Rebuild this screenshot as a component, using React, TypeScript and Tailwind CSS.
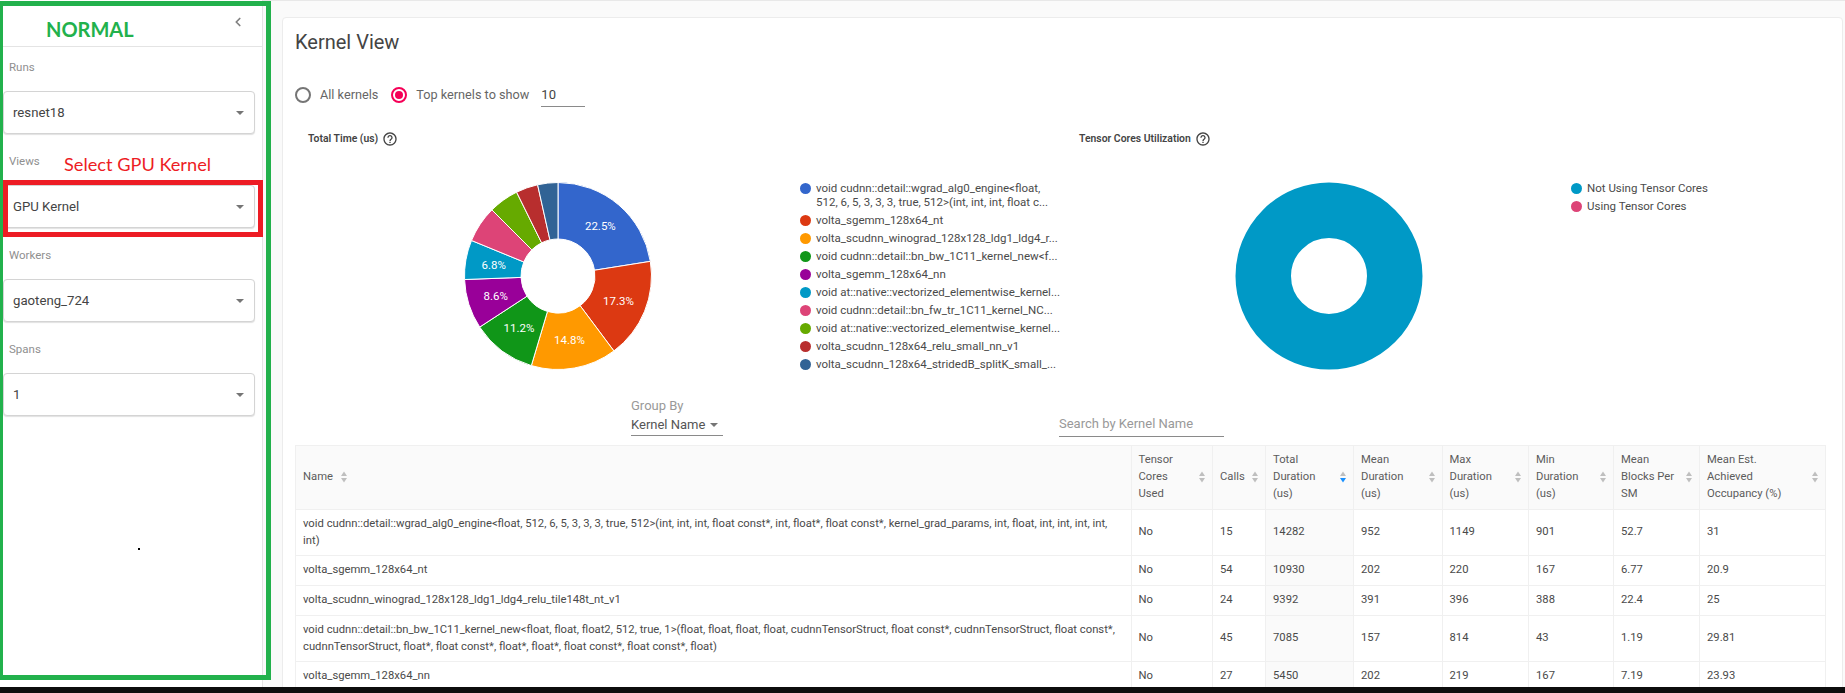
import { ChevronLeft } from "lucide-react";

const pieColors = ["#3366cc", "#dc3912", "#ff9900", "#109618", "#990099", "#0099c6", "#dd4477", "#66aa00", "#b82e2e", "#316395"];

const kernelSlices = [
  { value: 22.5, label: "22.5%" },
  { value: 17.3, label: "17.3%" },
  { value: 14.8, label: "14.8%" },
  { value: 11.2, label: "11.2%" },
  { value: 8.6, label: "8.6%" },
  { value: 6.8, label: "6.8%" },
  { value: 6.3 },
  { value: 5.2 },
  { value: 3.8 },
  { value: 3.5 },
];

const kernelLegend = [
  ["void cudnn::detail::wgrad_alg0_engine<float,", "512, 6, 5, 3, 3, 3, true, 512>(int, int, int, float c..."],
  ["volta_sgemm_128x64_nt"],
  ["volta_scudnn_winograd_128x128_ldg1_ldg4_r..."],
  ["void cudnn::detail::bn_bw_1C11_kernel_new<f..."],
  ["volta_sgemm_128x64_nn"],
  ["void at::native::vectorized_elementwise_kernel..."],
  ["void cudnn::detail::bn_fw_tr_1C11_kernel_NC..."],
  ["void at::native::vectorized_elementwise_kernel..."],
  ["volta_scudnn_128x64_relu_small_nn_v1"],
  ["volta_scudnn_128x64_stridedB_splitK_small_..."],
];

const columns = [
  { title: "Tensor Cores Used", width: 81.5 },
  { title: "Calls", width: 53 },
  { title: "Total Duration (us)", width: 88, active: true },
  { title: "Mean Duration (us)", width: 88.5 },
  { title: "Max Duration (us)", width: 86.5 },
  { title: "Min Duration (us)", width: 85 },
  { title: "Mean Blocks Per SM", width: 86 },
  { title: "Mean Est. Achieved Occupancy (%)", width: 126 },
];

const rows = [
  ["void cudnn::detail::wgrad_alg0_engine<float, 512, 6, 5, 3, 3, 3, true, 512>(int, int, int, float const*, int, float*, float const*, kernel_grad_params, int, float, int, int, int, int, int)", "No", "15", "14282", "952", "1149", "901", "52.7", "31"],
  ["volta_sgemm_128x64_nt", "No", "54", "10930", "202", "220", "167", "6.77", "20.9"],
  ["volta_scudnn_winograd_128x128_ldg1_ldg4_relu_tile148t_nt_v1", "No", "24", "9392", "391", "396", "388", "22.4", "25"],
  ["void cudnn::detail::bn_bw_1C11_kernel_new<float, float, float2, 512, true, 1>(float, float, float, float, cudnnTensorStruct, float const*, cudnnTensorStruct, float const*, cudnnTensorStruct, float*, float const*, float*, float*, float const*, float const*, float)", "No", "45", "7085", "157", "814", "43", "1.19", "29.81"],
  ["volta_sgemm_128x64_nn", "No", "27", "5450", "202", "219", "167", "7.19", "23.93"],
];

function polar(r: number, pct: number) {
  const a = (pct / 100) * Math.PI * 2;
  return [95 + r * Math.sin(a), 95 - r * Math.cos(a)];
}

function KernelDonut() {
  const outer = 93.5;
  const inner = 37;
  let start = 0;
  return (
    <svg width="190" height="190" className="shrink-0">
      {kernelSlices.map((s, i) => {
        const end = start + s.value;
        const [x1, y1] = polar(outer, start);
        const [x2, y2] = polar(outer, end);
        const [x3, y3] = polar(inner, end);
        const [x4, y4] = polar(inner, start);
        const mid = polar((outer + inner) / 2, start + s.value / 2);
        start = end;
        return (
          <g key={i}>
            <path
              d={`M${x1} ${y1}A${outer} ${outer} 0 0 1 ${x2} ${y2}L${x3} ${y3}A${inner} ${inner} 0 0 0 ${x4} ${y4}Z`}
              fill={pieColors[i]}
              stroke="#fff"
              strokeWidth="1"
            />
            {s.label && (
              <text x={mid[0]} y={mid[1] + 4} textAnchor="middle" fill="#fff" fontSize="11.5" fontFamily="Roboto, sans-serif">
                {s.label}
              </text>
            )}
          </g>
        );
      })}
    </svg>
  );
}

function TensorDonut() {
  return (
    <svg width="190" height="190" className="shrink-0">
      <circle cx="95" cy="95" r="65.75" fill="none" stroke={pieColors[5]} strokeWidth="55.5" />
    </svg>
  );
}

function HelpIcon() {
  return (
    <svg width="16" height="16" viewBox="0 0 24 24" fill="#444" className="shrink-0">
      <path d="M11 18h2v-2h-2v2zm1-16C6.48 2 2 6.48 2 12s4.48 10 10 10 10-4.48 10-10S17.52 2 12 2zm0 18c-4.41 0-8-3.59-8-8s3.59-8 8-8 8 3.59 8 8-3.59 8-8 8zm0-14c-2.21 0-4 1.79-4 4h2c0-1.1.9-2 2-2s2 .9 2 2c0 2-3 1.75-3 5h2c0-2.25 3-2.5 3-5 0-2.21-1.79-4-4-4z" />
    </svg>
  );
}

function SortIcon({ active }: { active?: boolean }) {
  return (
    <svg width="8" height="14" viewBox="0 0 8 14" className="shrink-0">
      <path d="M4 1.5 7 6H1z" fill="#bfbfbf" />
      <path d="M4 12.5 1 8h6z" fill={active ? "#1890ff" : "#bfbfbf"} />
    </svg>
  );
}

function Caret() {
  return (
    <svg width="8" height="4" viewBox="0 0 10 5" className="shrink-0">
      <path d="M0 0h10L5 5z" fill="#757575" />
    </svg>
  );
}

function SideSelect({ label, value }: { label: string; value: string }) {
  return (
    <div className="h-[94px]">
      <div className="h-[44px] pl-[9px] pt-[12px] text-[11.5px] leading-[16px] text-[#8f8f8f]">{label}</div>
      <div className="ml-[3px] flex h-[43px] w-[252px] items-center justify-between rounded border border-[#d4d4d4] bg-white pl-[9px] pr-[10px] text-[13.2px] text-[#444] shadow-[0_1px_1px_rgba(0,0,0,0.12)]">
        <span>{value}</span>
        <Caret />
      </div>
    </div>
  );
}

function Sidebar() {
  return (
    <aside className="h-full w-[263px] shrink-0 border-r border-[#e4e4e4] bg-white">
      <div className="flex h-[47px] items-start justify-end border-b border-[#e4e4e4] pr-[17px] pt-[15px]">
        <ChevronLeft size={14} strokeWidth={3} className="text-[#808080]" />
      </div>
      <SideSelect label="Runs" value="resnet18" />
      <SideSelect label="Views" value="GPU Kernel" />
      <SideSelect label="Workers" value="gaoteng_724" />
      <SideSelect label="Spans" value="1" />
    </aside>
  );
}

function Radio({ checked, label }: { checked?: boolean; label: string }) {
  return (
    <label className="flex items-center gap-[9px]">
      <span
        className={`flex h-[16px] w-[16px] items-center justify-center rounded-full border-2 ${
          checked ? "border-[#f50057]" : "border-[#757575]"
        }`}
      >
        {checked && <span className="h-[8px] w-[8px] rounded-full bg-[#f50057]" />}
      </span>
      <span className="text-[12.7px] text-[#666]">{label}</span>
    </label>
  );
}

function ChartTitle({ title }: { title: string }) {
  return (
    <div className="flex h-[16px] items-center gap-[4px] pl-[13px] text-[10.4px] font-semibold text-[#444]">
      {title}
      <HelpIcon />
    </div>
  );
}

function LegendDot({ color }: { color: string }) {
  return <span className="mt-[2px] h-[11px] w-[11px] shrink-0 rounded-full" style={{ backgroundColor: color }} />;
}

function KernelTable() {
  return (
    <table className="w-[1530px] table-fixed border-collapse border border-[#f0f0f0] text-[11.25px] leading-[16.7px] text-[#4a4a4a]">
      <colgroup>
        <col className="w-[835.5px]" />
        {columns.map((c) => (
          <col key={c.title} style={{ width: c.width }} />
        ))}
      </colgroup>
      <thead className="bg-[#fafafa]">
        <tr className="h-[64px]">
          <th className="border-r border-[#f0f0f0] px-[7px] text-left font-normal text-[#5c5c5c]">
            <div className="flex items-center gap-[7px]">
              Name
              <SortIcon />
            </div>
          </th>
          {columns.map((c) => (
            <th key={c.title} className="border-r border-[#f0f0f0] pl-[7px] pr-[6px] text-left font-normal text-[#5c5c5c]">
              <div className="flex items-center justify-between gap-[4px]">
                <span className="max-w-[78px]">{c.title}</span>
                <SortIcon active={c.active} />
              </div>
            </th>
          ))}
        </tr>
      </thead>
      <tbody>
        {rows.map((row, i) => (
          <tr key={i} className="border-t border-[#f0f0f0]">
            {row.map((cell, j) => (
              <td key={j} className={`border-r border-[#f0f0f0] px-[7px] py-[6px] ${j === 3 ? "bg-[#fafafa]" : ""}`}>
                {cell}
              </td>
            ))}
          </tr>
        ))}
      </tbody>
    </table>
  );
}

function MainCard() {
  return (
    <main className="h-full min-w-0 flex-1 overflow-hidden pl-[19px] pt-[16px]">
      <div className="h-[720px] w-[1561px] rounded-t border border-[#ececec] bg-white pl-[12px]">
        <h1 className="pt-[12px] text-[20px] leading-[24px] text-[#444]">Kernel View</h1>
        <div className="mt-[29px] flex h-[24px] items-center gap-[13px]">
          <Radio label="All kernels" />
          <Radio checked label="Top kernels to show" />
          <div className="ml-[-1px] h-[24px] w-[44px] border-b border-[#8a8a8a] text-[13px] leading-[23px] text-[#444]">10</div>
        </div>
        <div className="mt-[24px] flex">
          <section className="w-[771px] shrink-0">
            <ChartTitle title="Total Time (us)" />
            <div className="mt-[34px] flex">
              <div className="ml-[168px]">
                <KernelDonut />
              </div>
              <ul className="ml-[147px] w-[270px] text-[11.5px] leading-[14px] text-[#4a4a4a]">
                {kernelLegend.map((lines, i) => (
                  <li key={i} className="mb-[4px] flex gap-[5px]">
                    <LegendDot color={pieColors[i]} />
                    <span className="whitespace-nowrap">
                      {lines.map((l) => (
                        <div key={l}>{l}</div>
                      ))}
                    </span>
                  </li>
                ))}
              </ul>
            </div>
          </section>
          <section className="flex-1">
            <ChartTitle title="Tensor Cores Utilization" />
            <div className="mt-[34px] flex">
              <div className="ml-[168px]">
                <TensorDonut />
              </div>
              <ul className="ml-[147px] text-[11.5px] leading-[14px] text-[#4a4a4a]">
                <li className="mb-[4px] flex gap-[5px]">
                  <LegendDot color={pieColors[5]} />
                  Not Using Tensor Cores
                </li>
                <li className="flex gap-[5px]">
                  <LegendDot color={pieColors[6]} />
                  Using Tensor Cores
                </li>
              </ul>
            </div>
          </section>
        </div>
        <div className="mt-[22px] flex h-[44px]">
          <div className="ml-[336px] w-[92px]">
            <div className="text-[13px] leading-[18px] text-[#999]">Group By</div>
            <div className="flex h-[21px] items-center justify-between border-b border-[#8a8a8a] pr-[5px] text-[13px] text-[#555]">
              Kernel Name
              <Caret />
            </div>
          </div>
          <div className="ml-[336px] mt-[13px] h-[27px] w-[165px] border-b border-[#8a8a8a] text-[13px] leading-[28px] text-[#999]">
            Search by Kernel Name
          </div>
        </div>
        <div className="mt-[4px]">
          <KernelTable />
        </div>
      </div>
    </main>
  );
}

export default function App() {
  return (
    <div className="relative flex h-[693px] w-[1845px] flex-col overflow-hidden bg-white font-['Roboto',sans-serif]">
      <div className="flex h-[687px]">
        <Sidebar />
        <div className="h-full min-w-0 flex-1 border-t border-[#e8e8e8] bg-[#fafafa]">
          <MainCard />
        </div>
      </div>
      <div className="h-[6px] bg-[#0d0d0d]" />

      {/* annotations drawn over the screenshot */}
      <div className="pointer-events-none absolute left-0 top-[1px] h-[679px] w-[271px] border-y-[5px] border-l-[3px] border-r-[5px] border-[#22b14c]" />
      <div className="pointer-events-none absolute left-[3px] top-[180px] h-[57px] w-[260px] border-[5px] border-[#ed1c24]" />
      <div className="absolute left-[46px] top-[14px] font-['Lato',sans-serif] text-[20px] font-bold leading-[30px] text-[#22b14c]">NORMAL</div>
      <div className="absolute left-[64px] top-[151px] font-['Lato',sans-serif] text-[18.2px] leading-[26px] text-[#ed1c24]">Select GPU Kernel</div>
      <div className="absolute left-[138px] top-[548px] h-[2px] w-[2px] bg-black" />
    </div>
  );
}
